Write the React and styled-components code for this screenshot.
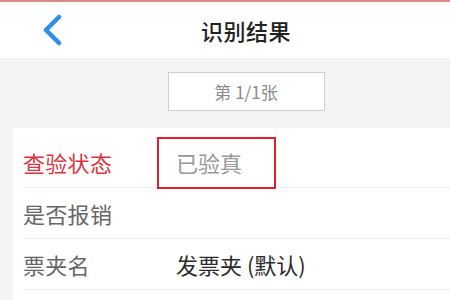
import React from "react";
import styled, { createGlobalStyle } from "styled-components";

const Global = createGlobalStyle`
  html, body { margin: 0; padding: 0; background: #f4f4f5; }
  body { font-family: "Noto Sans CJK SC", "Noto Sans", sans-serif; }
`;

const Page = styled.div`
  width: 450px;
  height: 300px;
  overflow: hidden;
  display: flex;
  flex-direction: column;
  background: #f4f4f5;
  border-top: 2px solid #d98a7c;
  box-sizing: border-box;
`;

const Header = styled.div`
  height: 56px;
  background: #fff;
  display: grid;
  grid-template-columns: 90px 1fr 48px;
  align-items: center;
`;

const Back = styled.div`
  display: flex;
  align-items: center;
  padding-left: 41px;
  padding-top: 0px;
`;

const Title = styled.div`
  text-align: center;
  font-size: 22px;
  font-weight: 500;
  color: #222;
  letter-spacing: 0.5px;
  line-height: 1;
  padding-top: 0px;
`;

const PagerBar = styled.div`
  height: 70px;
  display: flex;
  justify-content: center;
  align-items: flex-start;
  padding-top: 14px;
  padding-left: 42px;
  box-sizing: border-box;
`;

const Pager = styled.div`
  width: 157px;
  height: 39px;
  box-sizing: border-box;
  border: 1.5px solid #cfcfcf;
  background: #fff;
  color: #8a8a8a;
  font-size: 17px;
  display: flex;
  align-items: center;
  justify-content: center;
`;

const Card = styled.div`
  flex: 1;
  margin-left: 13px;
  background: #fff;
  padding-top: 9px;
  border-radius: 2px 0 0 0;
`;

const Row = styled.div`
  height: 50px;
  display: flex;
  align-items: center;
  position: relative;
  border-bottom: 1px solid #f1f1f1;
  margin-left: 10px;
`;

const Label = styled.div`
  width: 153px;
  font-size: 22px;
  line-height: 1;
  color: ${(p) => (p.$red ? "#d8363f" : "#666")};
  letter-spacing: 0.3px;
`;

const Value = styled.div`
  font-size: 22px;
  line-height: 1;
  color: ${(p) => (p.$muted ? "#999" : "#2a2a2a")};
`;

const Highlight = styled.div`
  position: absolute;
  left: 134px;
  top: 0px;
  width: 119px;
  height: 52px;
  box-sizing: border-box;
  border: 2px solid #e0202a;
`;

export default function App() {
  return (
    <>
      <Global />
      <Page>
        <Header>
          <Back>
            <svg width="22" height="32" viewBox="0 0 22 32">
              <path
                d="M18 3 L5 16 L18 29"
                fill="none"
                stroke="#2f8ee8"
                strokeWidth="4.5"
                strokeLinecap="round"
                strokeLinejoin="round"
              />
            </svg>
          </Back>
          <Title>识别结果</Title>
          <div />
        </Header>
        <PagerBar>
          <Pager>第 1/1张</Pager>
        </PagerBar>
        <Card>
          <Row>
            <Label $red>查验状态</Label>
            <Value $muted>已验真</Value>
            <Highlight />
          </Row>
          <Row>
            <Label>是否报销</Label>
          </Row>
          <Row>
            <Label>票夹名</Label>
            <Value>发票夹 (默认)</Value>
          </Row>
        </Card>
      </Page>
    </>
  );
}
